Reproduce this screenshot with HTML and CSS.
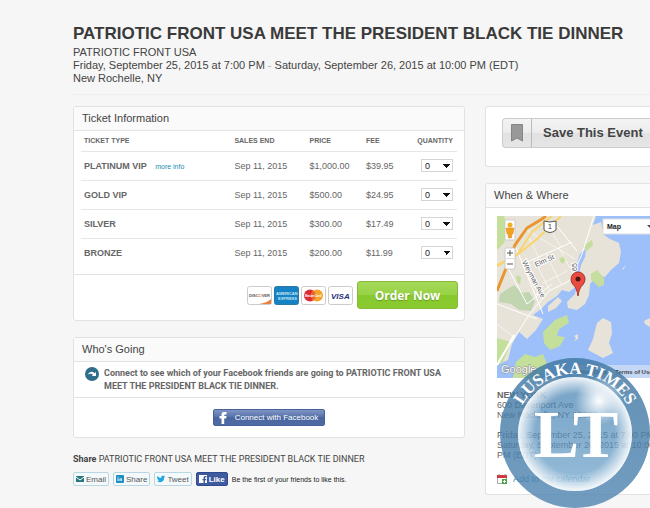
FILE: index.html
```html
<!DOCTYPE html>
<html lang="en">
  <head>
    <meta charset="UTF-8" />
    <meta name="viewport" content="width=device-width, initial-scale=1.0" />
    <title>PATRIOTIC FRONT USA MEET THE PRESIDENT BLACK TIE DINNER</title>
    <link rel="stylesheet" href="styles.css">
  </head>
  <body>
    <div class="page">
      <header class="event-header">
        <h1>PATRIOTIC FRONT USA MEET THE PRESIDENT BLACK TIE DINNER</h1>
        <p>PATRIOTIC FRONT USA</p>
        <p>Friday, September 25, 2015 at 7:00 PM <span class="dash">-</span> Saturday, September 26, 2015 at 10:00 PM (EDT)</p>
        <p>New Rochelle, NY</p>
      </header>

      <div class="columns">
        <main>
          <section class="panel">
            <h2>Ticket Information</h2>
            <form>
              <table class="tickets">
                <thead>
                  <tr>
                    <th class="type">TICKET TYPE</th>
                    <th class="ends">SALES END</th>
                    <th class="price">PRICE</th>
                    <th class="fee">FEE</th>
                    <th class="quantity">QUANTITY</th>
                  </tr>
                </thead>
                <tbody>
                  <tr>
                    <td class="type">PLATINUM VIP <a href="#" class="more">more info</a></td>
                    <td>Sep 11, 2015</td>
                    <td>$1,000.00</td>
                    <td>$39.95</td>
                    <td class="quantity"><select aria-label="Platinum VIP quantity"><option>0</option><option>1</option><option>2</option></select></td>
                  </tr>
                  <tr>
                    <td class="type">GOLD VIP</td>
                    <td>Sep 11, 2015</td>
                    <td>$500.00</td>
                    <td>$24.95</td>
                    <td class="quantity"><select aria-label="Gold VIP quantity"><option>0</option><option>1</option><option>2</option></select></td>
                  </tr>
                  <tr>
                    <td class="type">SILVER</td>
                    <td>Sep 11, 2015</td>
                    <td>$300.00</td>
                    <td>$17.49</td>
                    <td class="quantity"><select aria-label="Silver quantity"><option>0</option><option>1</option><option>2</option></select></td>
                  </tr>
                  <tr>
                    <td class="type">BRONZE</td>
                    <td>Sep 11, 2015</td>
                    <td>$200.00</td>
                    <td>$11.99</td>
                    <td class="quantity"><select aria-label="Bronze quantity"><option>0</option><option>1</option><option>2</option></select></td>
                  </tr>
                </tbody>
              </table>
              <div class="order">
                <svg class="card" viewBox="0 0 25 19">
                  <rect x=".5" y=".5" width="24" height="18" rx="2" fill="#fff" stroke="#ccc" />
                  <path d="M24 13v5H12q8-1 12-5z" fill="#ef7d3b" />
                  <text x="2" y="11" font-size="4" font-weight="bold" fill="#555">DISC<tspan fill="#ef7d3b">O</tspan>VER</text>
                </svg>
                <svg class="card" viewBox="0 0 25 19">
                  <rect x=".5" y=".5" width="24" height="18" rx="2" fill="#1583c3" stroke="#2b78a8" />
                  <text x="2" y="9" font-size="4" font-weight="bold" fill="#c5e5f7">AMERICAN</text>
                  <text x="4" y="14" font-size="4" font-weight="bold" fill="#c5e5f7">EXPRESS</text>
                </svg>
                <svg class="card" viewBox="0 0 25 19">
                  <rect x=".5" y=".5" width="24" height="18" rx="2" fill="#fff" stroke="#ccc" />
                  <circle cx="9" cy="9.5" r="6" fill="#dc2b34" />
                  <circle cx="16" cy="9.5" r="6" fill="#f5a12a" />
                  <path d="M12.500 4.800a6 6 0 0 1 0 9.400a6 6 0 0 1 0-9.400z" fill="#e8622c" />
                  <text x="4" y="11" font-size="3" font-weight="bold" fill="#fff">MasterCard</text>
                </svg>
                <svg class="card" viewBox="0 0 25 19">
                  <rect x=".5" y=".5" width="24" height="18" rx="2" fill="#fff" stroke="#ccc" />
                  <text x="3" y="13" font-size="8" font-weight="bold" font-style="italic" fill="#25307b">VISA</text>
                </svg>
                <button type="button" class="order-now">Order Now</button>
              </div>
            </form>
          </section>

          <section class="panel">
            <h2>Who's Going</h2>
            <div class="friends">
              <svg class="friends-icon" viewBox="0 0 14 14">
                <circle cx="7" cy="7" r="7" fill="#2f6f8c" />
                <path d="M2.500 7.500Q6 3 9.500 6.200L11 5v4H6.800l1.300-1.200Q6 5.800 2.500 7.500z" fill="#fff" />
              </svg>
              <p>Connect to see which of your Facebook friends are going to PATRIOTIC FRONT USA MEET THE PRESIDENT BLACK TIE DINNER.</p>
            </div>
            <div class="connect">
              <button type="button" class="facebook">
                <svg viewBox="0 0 16 16"><path d="M7 14V8.500H5V6h2V4.500Q7 2 9.500 2H12v2.400h-1.300q-1 0-1 .9V6H12l-.3 2.500h-2V14z" fill="#fff" /></svg>
                <span>Connect with Facebook</span>
              </button>
            </div>
          </section>

          <section class="share">
            <p><b>Share</b> PATRIOTIC FRONT USA MEET THE PRESIDENT BLACK TIE DINNER</p>
            <div class="share-row">
              <button type="button" class="share-button">
                <svg viewBox="0 0 8 8"><path d="M0 1h8v6H0z" fill="#27767f" /><path d="M0 2l4 3 4-3" fill="none" stroke="#fff" /></svg>Email
              </button>
              <button type="button" class="share-button">
                <svg viewBox="0 0 8 8"><rect width="8" height="8" rx="1" fill="#1c8fc4" /><path d="M1.500 3.500h1V6h-1zM1.500 1.700h1v1h-1zM3.500 3.500H6V6H5.300V4.300H4.500V6h-1z" fill="#fff" /></svg>Share
              </button>
              <button type="button" class="share-button">
                <svg viewBox="0 0 8 8"><path d="M0 1Q2 3 4 3 4 .5 6 .8L8 1 7.200 2.500Q7 7.300 2.500 7.300L0 6.600 2 6 .5 4.500 1.300 4.300 0 3z" fill="#21a7e0" /></svg>Tweet
              </button>
              <button type="button" class="like">
                <svg viewBox="0 0 8 8"><path d="M0 0h8v8H6V5.300h1.300V4H6V3q0-.8.8-.8h.7V1H6Q4.500 1 4.500 2.800V4H3.500v1.300h1V8H0z" fill="#fff" /></svg>Like
              </button>
              <span class="first">Be the first of your friends to like this.</span>
            </div>
          </section>
        </main>

        <aside>
          <section class="panel save">
            <button type="button" class="save-button">
              <svg viewBox="0 0 12 18"><path d="M.5.500h11v16.500L6 14 .5 17z" fill="#999" stroke="#858585" /></svg>
              <span>Save This Event</span>
            </button>
          </section>

          <section class="panel">
            <h2>When &amp; Where</h2>
            <div class="where">
              <svg class="map" viewBox="0 0 153 162" preserveAspectRatio="xMinYMin slice">
                <rect width="400" height="162" fill="#9dc0fa" />
                <!-- mainland -->
                <path d="M0 0H100L96 9 104 6 107 19 113 23 122 27 124 36 122 47 114 54 108 61 100 59 93 68 92 79 88 88 80 94 71 92 70 86 78 78 80 70 72 76 65 74 60 80 51 86 44 93 36 99 46 103 39 114 30 123 22 116 15 128 11 144 0 149z" fill="#e8e3d8" />
                <path d="M51 90l10-9 4 4-6 7-8 4zM125 54l3-5-1 4zM77 120l4-2v5l-4 2 2-3zM147 105l6-3v9l-5-3z" fill="#e8e3d8" />
                <!-- parks -->
                <path d="M0 0h7l4 14-4 13-7 7zM0 122l14 4-8 20-6 3z" fill="#c3df9a" />
                <path d="M3 78l14-9 8 8 7-1 6 9-4 10-12-1-8-6-12-2z" fill="#c0d5b0" />
                <path d="M46 116l12-12 12-5 2 8-10 6-2 7 8 1-5 9-10 4-6-7z" fill="#c3df9a" />
                <path d="M19 146l9-8 10 3 8-3 4 10-8 14H16z" fill="#c3df9a" />
                <path d="M94 58l6-4 7 8 0 7-5 2-8-7zM86 30l9-6 1 5-6 6zM62 43l5-3 2 4-4 4zM19 59l5 2-1 8-3-3z" fill="#c6dda0" />
                <path d="M100 107l6-5 8 4 1 11-3 10 4 10-10 5-15-8 5-11z" fill="#e8e3d8" />
                <!-- water inlets -->
                <path d="M83 38l6-5-1 8-4 8-2 9-3 6V51zM96 9l9-7 10-2H99z" fill="#9dc0fa" />
                <!-- side streets -->
                <g fill="none" stroke="#fff">
                  <path d="M17 27L46 98M26 48L75 26M0 88l40 15M14 127l18-28 20-24 20-10 12-24L97 0M60 10l20 25M10 50l20 38 25-20" />
                  <path d="M37 43l16 32M49 38l15 30M62 32l11 20M32 22l10 20M50 8l14 23M0 108l17 13M28 13l50 30M46 67l24-12" opacity=".6" />
                </g>
                <path d="M0 149l10-17 7-13" fill="none" stroke="#fff" stroke-width="2" />
                <!-- highways -->
                <path d="M0 50L20 39 40 23 64 0M0 49l20-10 15-23L55 0" fill="none" stroke="#f8d469" stroke-width="2" />
                <path d="M0 75L12 45 18 29 30 12 45 3 49 0" fill="none" stroke="#e9962f" stroke-width="3" />
                <!-- road names -->
                <g font-size="7" fill="#555" stroke="#fff" stroke-width="2" paint-order="stroke">
                  <text transform="translate(39 51) rotate(-24)">Elm St</text>
                  <text transform="translate(25 46) rotate(62)">Weyman Ave</text>
                  <text transform="translate(80 55) rotate(-90)">65</text>
                </g>
                <path d="M47 5q6 2 12 0v9q-6 5-12 0z" fill="#fff" stroke="#555" />
                <text x="51" y="13" font-size="7" fill="#333">1</text>
                <!-- street view and zoom controls -->
                <rect x="8" y="4" width="10" height="20" rx="1" fill="#fff" stroke="#ccc" />
                <circle cx="13" cy="9" r="2.500" fill="#f2b01e" />
                <path d="M9 12h8l-1 6h-1l-.5 4h-3L11 18h-1z" fill="#f2a31e" stroke="#d9822b" stroke-width=".5" />
                <rect x="8" y="32" width="10" height="21" rx="1" fill="#fff" stroke="#ccc" />
                <path d="M10 37h6M13 34v6M10 48h6" stroke="#555" fill="none" />
                <path d="M9 42.500h8" stroke="#ddd" />
                <!-- map type -->
                <rect x="106" y="3" width="60" height="15" fill="#fff" stroke="#ddd" />
                <text x="110" y="13" font-size="7" font-weight="bold" fill="#222">Map</text>
                <path d="M150 9h6l-3 3z" fill="#444" />
                <!-- pin -->
                <path d="M81 80Q80 72 76 68.500Q74 66 74 63a7 7 0 0 1 14 0q0 3-2 5.500Q82 72 81 80z" fill="#ea4c42" stroke="#a8322b" />
                <circle cx="81" cy="63" r="2.500" fill="#501510" />
                <!-- attribution -->
                <rect x="75" y="149" width="90" height="13" fill="#dde6f0" opacity=".6" />
                <text x="4" y="157" font-size="11" fill="#fff" stroke="#888" stroke-width="1" paint-order="stroke">Google</text>
                <text x="83" y="158" font-size="6" font-weight="bold" fill="#555">Map Data</text>
                <text x="118" y="158" font-size="6" font-weight="bold" fill="#444">Terms of Use</text>
              </svg>
              <address><b>NEW YORK</b><br>600 Davenport Ave<br>New Rochelle, NY 10805</address>
              <p>Friday, September 25, 2015 at 7:00 PM -<br>Saturday, September 26, 2015 at 10:00<br>PM (EDT)</p>
              <a href="#" class="calendar">
                <svg viewBox="0 0 10 10"><path d="M.5 1.500h9v8h-9z" fill="#fff" stroke="#aaa" /><path d="M0 1h10v3H0z" fill="#d5343c" /><path d="M2 0v2M8 0v2" stroke="#888" /><path d="M5 5h5v5H5z" fill="#46a546" /><path d="M7.500 6v3M6 7.500h3" stroke="#fff" /></svg>
                Add to my calendar
              </a>
            </div>
          </section>
        </aside>
      </div>

      <svg class="stamp" viewBox="0 0 150 150">
        <defs>
          <linearGradient id="ring" x2="0" y2="1">
            <stop offset="0" stop-color="#3f77a2" />
            <stop offset="1" stop-color="#5488b3" />
          </linearGradient>
          <linearGradient id="glass" x2="0" y2="1">
            <stop offset="0" stop-color="#3f7dae" />
            <stop offset="1" stop-color="#6ea3cb" />
          </linearGradient>
          <radialGradient id="rim">
            <stop offset=".7" stop-color="#fff" stop-opacity="0" />
            <stop offset="1" stop-color="#fff" stop-opacity=".9" />
          </radialGradient>
          <radialGradient id="shine">
            <stop offset="0" stop-color="#fff" />
            <stop offset="1" stop-color="#fff" stop-opacity="0" />
          </radialGradient>
          <path id="arc" d="M15 76a60 60 0 0 1 120 0" />
        </defs>
        <path d="M75 0a75 75 0 0 1 0 150a75 75 0 0 1 0-150zM75 19a57 57 0 0 0 0 114a57 57 0 0 0 0-114z" fill="url(#ring)" opacity=".82" />
        <circle cx="75" cy="76" r="57" fill="url(#glass)" opacity=".72" />
        <circle cx="75" cy="76" r="57" fill="url(#rim)" />
        <circle cx="99" cy="43" r="24" fill="url(#shine)" />
        <text class="stamp-name"><textPath href="#arc" startOffset="50%" text-anchor="middle">LUSAKA TIMES</textPath></text>
        <text class="stamp-initials" x="76" y="99" text-anchor="middle">LT</text>
      </svg>
    </div>
  </body>
</html>
```

FILE: styles.css
```css
* {
  box-sizing: border-box;
}
body {
  margin: 0;
  background-color: #f6f6f6;
  font-family: "Liberation Sans", Arial, sans-serif;
  font-size: 9px;
  color: #666;
}
h1,
h2,
p {
  margin: 0;
}
button,
select {
  font-family: inherit;
  cursor: pointer;
}
svg {
  flex: none;
}
a {
  color: #1c8db0;
  text-decoration: none;
}
.page {
  position: relative;
  min-height: 508px;
  padding: 24px 0 0 73px;
  overflow: hidden;
}
.event-header {
  padding-bottom: 9px;
  border-bottom: 1px solid #eee;
  font-size: 11px;
  line-height: 13px;
  color: #444;
  white-space: nowrap;
}
.event-header h1 {
  margin-bottom: 2px;
  font-size: 17px;
  line-height: 20px;
  color: #3a3a3a;
}
.dash {
  color: #aaa;
}
.columns {
  display: grid;
  grid-template-columns: minmax(0, 392fr) minmax(0, 165fr);
  gap: 20px;
  padding-top: 11px;
}
.panel {
  margin-bottom: 16px;
  background-color: #fff;
  border: 1px solid #e2e2e2;
  border-radius: 3px;
}
.panel h2 {
  padding: 0 8px;
  background-color: #fafafa;
  border-bottom: 1px solid #e2e2e2;
  font-size: 11px;
  font-weight: normal;
  line-height: 23px;
  color: #444;
}

/* tickets */
.tickets {
  width: calc(100% - 14px);
  margin: 0 7px 7px;
  border-collapse: collapse;
  table-layout: fixed;
}
.tickets th,
.tickets td {
  height: 29px;
  padding: 0 3px;
  border-bottom: 1px solid #e6e6e6;
  text-align: left;
  white-space: nowrap;
}
.tickets th {
  height: 20px;
  font-size: 7px;
}
.tickets tr:last-child td {
  border-bottom: 0;
}
.tickets td.type {
  font-weight: bold;
}
th.type {
  width: 40%;
}
th.ends {
  width: 20%;
}
th.price {
  width: 15%;
}
.tickets .quantity {
  padding-right: 4px;
  text-align: right;
}
.more {
  margin-left: 6px;
  font-size: 7px;
  font-weight: normal;
}
.tickets select {
  width: 32px;
  height: 13px;
  padding: 0 3px;
  appearance: none;
  border: 1px solid #d5d5d5;
  border-radius: 0;
  background: linear-gradient(to top right, transparent 50%, #111 50%) 21px 4px / 4px 4px no-repeat,
    linear-gradient(to top left, transparent 50%, #111 50%) 24px 4px / 4px 4px no-repeat, #fff;
  font-size: 9px;
  color: #222;
}
.order {
  display: flex;
  justify-content: flex-end;
  align-items: center;
  gap: 2px;
  padding: 6px 6px 11px;
  border-top: 1px solid #e2e2e2;
}
.card {
  width: 25px;
  height: 19px;
}
.order-now {
  width: 101px;
  height: 28px;
  margin-left: 2px;
  padding: 0;
  border: 1px solid #86bb3c;
  border-radius: 3px;
  background: linear-gradient(#a5d958, #98d147 50%, #86c92c 50%, #8bca30);
  font-family: "Open Sans", sans-serif;
  font-size: 12px;
  font-weight: bold;
  color: #fff;
  text-shadow: 0 1px 1px #6a9a28;
}

/* who's going */
.friends {
  display: flex;
  gap: 5px;
  padding: 5px 0 4px 11px;
  border-bottom: 1px solid #e2e2e2;
  font-family: Roboto, sans-serif;
  font-weight: bold;
  line-height: 13px;
}
.friends-icon {
  width: 14px;
  height: 14px;
}
.connect {
  display: flex;
  justify-content: center;
  padding: 11px;
}
.facebook {
  display: flex;
  align-items: center;
  height: 17px;
  padding: 0 6px 0 0;
  border: 1px solid #47619b;
  border-radius: 2px;
  background: linear-gradient(#7e94c3, #5570a8 50%, #4a66a0 50%, #4f6ba5);
  font-size: 8px;
  color: #fff;
}
.facebook svg {
  width: 17px;
  height: 16px;
}
.facebook span {
  padding-left: 4px;
}

/* share */
.share {
  color: #444;
}
.share p {
  font-family: Roboto, sans-serif;
  line-height: 10px;
}
.share-row {
  display: flex;
  align-items: center;
  gap: 4px;
  margin-top: 8px;
}
.share-button,
.like {
  display: flex;
  align-items: center;
  gap: 2px;
  height: 14px;
  padding: 0 2px;
  border: 1px solid #b9d6e2;
  border-radius: 2px;
  background-color: #f4fafc;
  font-size: 8px;
  color: #555;
}
.share-row svg {
  width: 8px;
  height: 8px;
}
.like {
  border-color: #2f4b8f;
  background-color: #3f5b9f;
  font-weight: bold;
  color: #fff;
}
.first {
  font-size: 7px;
  color: #222;
  white-space: nowrap;
}

/* sidebar, its panels run past the right edge */
aside .panel {
  border-right: 0;
  border-radius: 3px 0 0 3px;
  overflow: hidden;
}
aside .panel:last-child {
  margin-bottom: 0;
}
.save {
  padding: 11px 0 18px 16px;
}
.save-button {
  display: flex;
  align-items: center;
  width: 100%;
  height: 30px;
  padding: 0;
  border: 1px solid #ccc;
  border-right: 0;
  border-radius: 4px 0 0 4px;
  background: linear-gradient(#f3f3f3, #ececec 50%, #e1e1e1 50%, #e6e6e6);
  font-size: 13px;
  font-weight: bold;
  color: #444;
  white-space: nowrap;
}
.save-button svg {
  width: 12px;
  height: 18px;
  margin: 0 8px;
}
.save-button span {
  padding-left: 11px;
  border-left: 1px solid #bbb;
  line-height: 28px;
}
.where {
  padding: 8px 0 10px 11px;
  line-height: 10px;
  white-space: nowrap;
}
.map {
  display: block;
  width: 100%;
  height: 162px;
  margin-bottom: 12px;
}
.where address {
  margin-bottom: 10px;
  font-style: normal;
}
.calendar {
  display: flex;
  align-items: center;
  gap: 6px;
  margin-top: 14px;
}
.calendar svg {
  width: 10px;
  height: 10px;
}

/* round stamp over the corner of the page */
.stamp {
  position: absolute;
  right: 0;
  bottom: 0;
  width: 150px;
  height: 150px;
}
.stamp text {
  font-family: "Liberation Serif", serif;
  font-weight: bold;
  fill: #fff;
}
.stamp .stamp-name {
  font-size: 17px;
}
.stamp .stamp-initials {
  font-size: 68px;
}
```
